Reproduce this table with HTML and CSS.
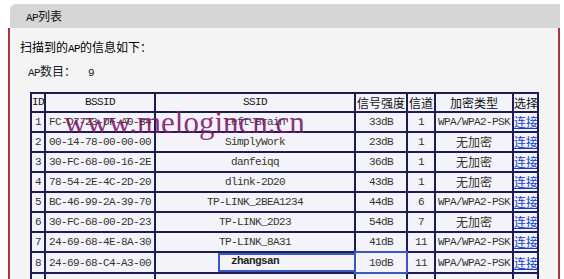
FILE: index.html
```html
<!DOCTYPE html>
<html lang="zh-CN">
<head>
<meta charset="utf-8">
<title>AP列表</title>
<link rel="stylesheet" href="styles.css">
</head>
<body>
<div class="panel">
  <div class="title"><span class="lat">AP</span>列表</div>
  <div class="content">
    <p class="intro">扫描到的<span class="lat">AP</span>的信息如下：</p>
    <p class="count"><span class="lat">AP</span>数目：<span class="lat num">9</span></p>
    <table class="aps">
      <tr class="head">
        <td class="c-id lat">ID</td>
        <td class="c-bssid lat">BSSID</td>
        <td class="c-ssid lat">SSID</td>
        <td class="c-sig cjk">信号强度</td>
        <td class="c-ch cjk">信道</td>
        <td class="c-enc cjk">加密类型</td>
        <td class="c-sel cjk">选择</td>
      </tr>
      <tr>
        <td class="lat">1</td><td class="lat left">FC-D7-23-DF-A0-B4</td><td class="lat">Left-Brain</td><td class="lat">33dB</td><td class="lat">1</td><td class="lat">WPA/WPA2-PSK</td><td class="cjk"><a href="#">连接</a></td>
      </tr>
      <tr>
        <td class="lat">2</td><td class="lat left">00-14-78-00-00-00</td><td class="lat">SimplyWork</td><td class="lat">23dB</td><td class="lat">1</td><td class="cjk">无加密</td><td class="cjk"><a href="#">连接</a></td>
      </tr>
      <tr>
        <td class="lat">3</td><td class="lat left">30-FC-68-00-16-2E</td><td class="lat">danfeiqq</td><td class="lat">36dB</td><td class="lat">1</td><td class="cjk">无加密</td><td class="cjk"><a href="#">连接</a></td>
      </tr>
      <tr>
        <td class="lat">4</td><td class="lat left">78-54-2E-4C-2D-20</td><td class="lat">dlink-2D20</td><td class="lat">43dB</td><td class="lat">1</td><td class="cjk">无加密</td><td class="cjk"><a href="#">连接</a></td>
      </tr>
      <tr>
        <td class="lat">5</td><td class="lat left">BC-46-99-2A-39-70</td><td class="lat">TP-LINK_2BEA1234</td><td class="lat">44dB</td><td class="lat">6</td><td class="lat">WPA/WPA2-PSK</td><td class="cjk"><a href="#">连接</a></td>
      </tr>
      <tr>
        <td class="lat">6</td><td class="lat left">30-FC-68-00-2D-23</td><td class="lat">TP-LINK_2D23</td><td class="lat">54dB</td><td class="lat">7</td><td class="cjk">无加密</td><td class="cjk"><a href="#">连接</a></td>
      </tr>
      <tr>
        <td class="lat">7</td><td class="lat left">24-69-68-4E-8A-30</td><td class="lat">TP-LINK_8A31</td><td class="lat">41dB</td><td class="lat">11</td><td class="lat">WPA/WPA2-PSK</td><td class="cjk"><a href="#">连接</a></td>
      </tr>
      <tr>
        <td class="lat">8</td><td class="lat left">24-69-68-C4-A3-00</td><td class="lat edit-cell"><div class="edit">zhangsan</div></td><td class="lat hl">10dB</td><td class="lat">11</td><td class="lat">WPA/WPA2-PSK</td><td class="cjk"><a href="#">连接</a></td>
      </tr>
      <tr>
        <td class="lat"></td><td class="lat"></td><td class="lat"></td><td class="lat"></td><td class="lat"></td><td class="lat"></td><td class="cjk"></td>
      </tr>
    </table>
  </div>
</div>
<div class="watermark">www.melogincn.cn</div>
</body>
</html>
```

FILE: styles.css
```css
html {
  overflow: hidden;
}
body {
  margin: 0;
  background: #ffffff;
  font-family: "Noto Sans CJK SC", "Liberation Sans", sans-serif;
  font-size: 12px;
  color: #111;
  position: relative;
}
.lat {
  font-family: "Liberation Mono", "Noto Sans CJK SC", monospace;
  font-size: 11px;
  letter-spacing: -0.6px;
}
.cjk {
  font-family: "Noto Sans CJK SC", sans-serif;
  font-size: 12px;
}
.panel {
  margin: 4px 0 0 8px;
  width: 552px;
}
.title {
  margin-left: 2px;
  height: 24px;
  line-height: 24px;
  background: #d6d6d6;
  border-top-left-radius: 6px;
  padding-left: 16px;
  color: #111;
}
.content {
  background: #f4f4f4;
  border-left: 2px solid #a33a3a;
  border-right: 2px solid #a33a3a;
  padding: 11px 0 20px 10px;
  height: 400px;
}
.intro {
  margin: 0;
  line-height: 16px;
  color: #000;
}
.count {
  margin: 6px 0 0 8px;
  line-height: 16px;
  color: #222;
}
.num {
  margin-left: 12px;
}
.aps {
  margin: 11px 0 0 10px;
  border-collapse: separate;
  border-spacing: 2px;
  background: #1c1c58;
  width: 509px;
  table-layout: fixed;
}
.aps td {
  background: #f3f3f9;
  height: 18px;
  padding: 0;
  text-align: center;
  vertical-align: middle;
  color: #333;
  white-space: nowrap;
  overflow: hidden;
  line-height: 18px;
}
.aps tr.head td {
  height: 17px;
  line-height: 17px;
  color: #111;
}
.aps td.left {
  text-align: left;
  padding-left: 3px;
}
.c-id { width: 12px; }
.c-bssid { width: 108px; }
.c-ssid { width: 198px; }
.c-sig { width: 50px; }
.c-ch { width: 26px; }
.c-enc { width: 76px; }
.c-sel { width: 23px; }
.aps a {
  color: #1040d0;
  text-decoration: underline;
}
.aps td.edit-cell {
  overflow: visible;
  text-align: left;
  padding-left: 62px;
}
.edit {
  height: 15px;
  line-height: 12px;
  border: 2px solid #3a58c4;
  border-right: 0;
  padding-left: 11px;
  font-weight: bold;
  color: #222;
}
.aps td.hl {
  outline: 2px solid #3a58c4;
}
.watermark {
  position: absolute;
  left: 64px;
  top: 108px;
  font-family: "Liberation Serif", serif;
  font-size: 31px;
  line-height: 30px;
  color: rgba(128, 22, 108, 0.9);
  pointer-events: none;
}
```
